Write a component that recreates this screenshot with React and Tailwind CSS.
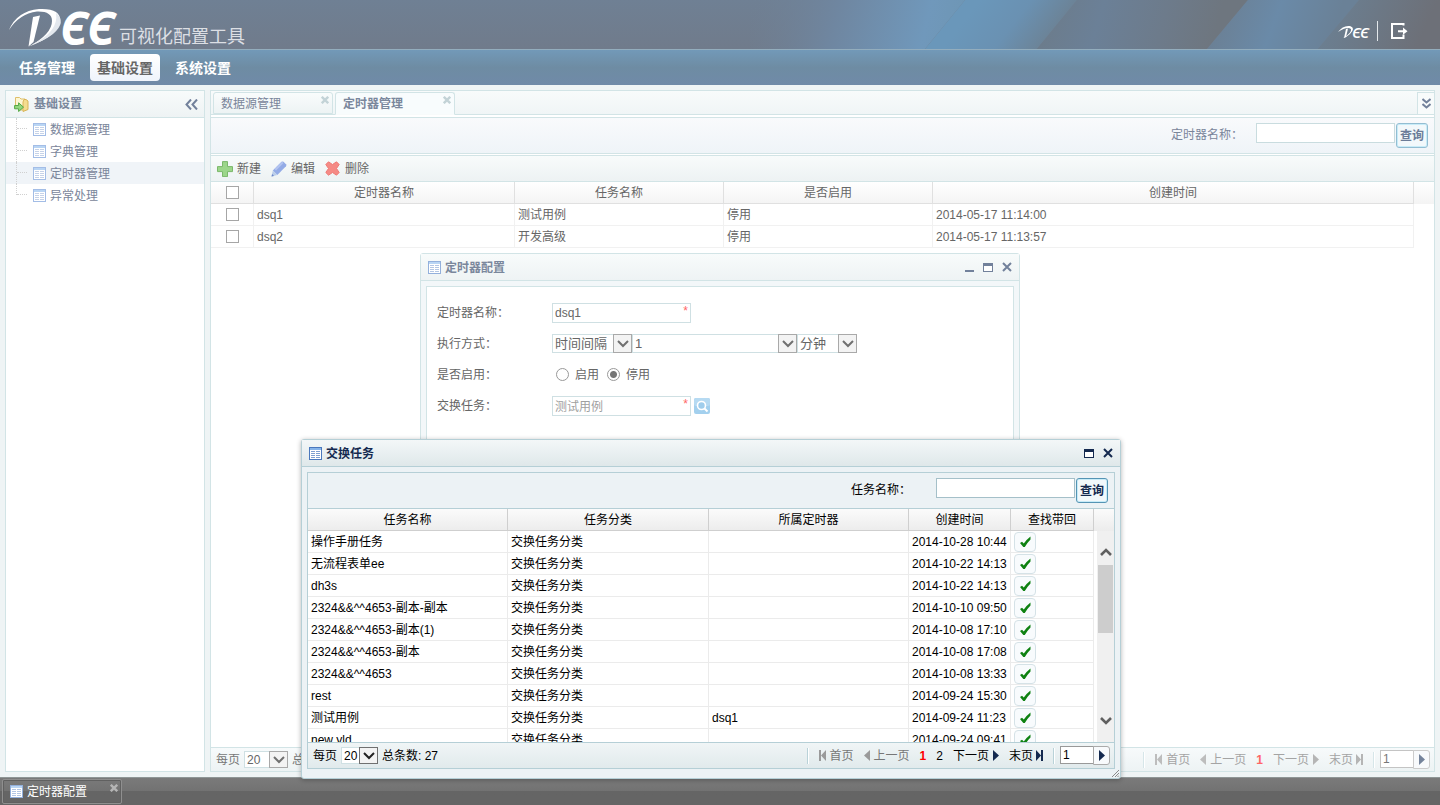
import React, { useState } from 'react';

const MENU = ['任务管理', '基础设置', '系统设置'];
const TREE = ['数据源管理', '字典管理', '定时器管理', '异常处理'];
const TABS = ['数据源管理', '定时器管理'];

const TIMERS = [
  { name: 'dsq1', task: '测试用例', status: '停用', created: '2014-05-17 11:14:00' },
  { name: 'dsq2', task: '开发高级', status: '停用', created: '2014-05-17 11:13:57' },
];

const TASKS = [
  { name: '操作手册任务', timer: '', created: '2014-10-28 10:44' },
  { name: '无流程表单ee', timer: '', created: '2014-10-22 14:13' },
  { name: 'dh3s', timer: '', created: '2014-10-22 14:13' },
  { name: '2324&&^^4653-副本-副本', timer: '', created: '2014-10-10 09:50' },
  { name: '2324&&^^4653-副本(1)', timer: '', created: '2014-10-08 17:10' },
  { name: '2324&&^^4653-副本', timer: '', created: '2014-10-08 17:08' },
  { name: '2324&&^^4653', timer: '', created: '2014-10-08 13:33' },
  { name: 'rest', timer: '', created: '2014-09-24 15:30' },
  { name: '测试用例', timer: 'dsq1', created: '2014-09-24 11:23' },
  { name: 'new yld', timer: '', created: '2014-09-24 09:41' },
];

/* ---------- icons ---------- */

function GridIcon({ strong, light }) {
  const border = strong ? '#4a78bd' : light ? '#a3bde6' : '#93b0dc';
  const line = strong ? '#7d9fd0' : light ? '#c5d2e8' : '#b3c6e4';
  const head = strong ? '#86b4ea' : '#b9d5f4';
  return (
    <svg width="13" height="13" viewBox="0 0 13 13" shapeRendering="crispEdges" className="shrink-0">
      <rect width="13" height="13" fill={border} />
      <rect x="1" y="1" width="11" height="2" fill={head} />
      <rect x="1" y="3" width="11" height="9" fill="#fff" />
      {[4, 6, 8, 10].map(y => (
        <g key={y} fill={line}>
          <rect x="2" y={y} width="4" height="1" />
          <rect x="7" y={y} width="4" height="1" />
        </g>
      ))}
    </svg>
  );
}

function FolderIcon() {
  return (
    <svg width="15" height="15" viewBox="0 0 15 15" className="shrink-0">
      <path d="M1.500 8V.5h4l1.500 1.500h4v11H6" fill="#fdf6d3" stroke="#dfbf6a" />
      <path d="M10 2.500h2l2 1.500v8.500L9 14.500V5z" fill="#f4dc90" stroke="#d8b458" />
      <path d="M.6 8.500h4V5.800L9.500 10.200 4.600 14.500v-2.700h-4z" fill="#93d67e" stroke="#54a842" />
    </svg>
  );
}

function PlusIcon() {
  return (
    <svg width="16" height="16" viewBox="0 0 16 16">
      <path d="M5.500.6h5v5h5v5h-5v5h-5v-5h-5v-5h5z" fill="#9cd68a" stroke="#7bb86b" strokeLinejoin="round" />
    </svg>
  );
}

function PencilIcon() {
  return (
    <svg width="16" height="16" viewBox="0 0 16 16">
      <path d="M1.800 9.500L10.500.8q1-.8 2 0l2.500 2.500q.8 1 0 2L6.300 14z" fill="#93abe6" />
      <path d="M3.500 8l7.500-7.300 1.500 1.400L5 9.600z" fill="#b3c4f0" />
      <path d="M1.800 9.500L6.300 14 .5 15.500z" fill="#b9cdea" />
      <path d="M.5 15.500l.6-2.500 1.900 1.900z" fill="#6c87c8" />
    </svg>
  );
}

function DeleteIcon() {
  return (
    <svg width="15" height="15" viewBox="0 0 15 15">
      <path d="M3.500.8l4 2.700 4-2.700 2.700 2.700-2.700 4 2.700 4-2.700 2.700-4-2.700-4 2.700L.8 11.500l2.700-4-2.700-4z" fill="#f58a85" stroke="#ee7a76" strokeLinejoin="round" />
    </svg>
  );
}

function CrossIcon({ size, color, width }) {
  return (
    <svg width={size} height={size} viewBox="0 0 10 10">
      <path d="M1 1l8 8M9 1l-8 8" stroke={color} strokeWidth={width} />
    </svg>
  );
}

function FirstIcon() {
  return (
    <svg width="7" height="11" viewBox="0 0 7 11" fill="currentColor">
      <path d="M0 0h2v11H0zM7 0v11L2 5.500z" />
    </svg>
  );
}

function LastIcon() {
  return (
    <svg width="7" height="11" viewBox="0 0 7 11" fill="currentColor">
      <path d="M5 0h2v11H5zM0 0v11l5-5.500z" />
    </svg>
  );
}

function LeftIcon() {
  return (
    <svg width="6" height="11" viewBox="0 0 6 11" fill="currentColor">
      <path d="M6 0v11L0 5.500z" />
    </svg>
  );
}

function RightIcon() {
  return (
    <svg width="6" height="11" viewBox="0 0 6 11" fill="currentColor">
      <path d="M0 0v11l6-5.500z" />
    </svg>
  );
}

function CheckIcon() {
  return (
    <svg width="13" height="12" viewBox="0 0 13 12">
      <path d="M1 7l2-1.200 1.800 1.800Q7.500 3.500 11.500.5V3.500Q8.500 6.500 5.800 11H4.300z" fill="#0f8212" />
    </svg>
  );
}

function Chevron({ up }) {
  return (
    <svg width="12" height="8" viewBox="0 0 12 8" fill="none">
      <path d={up ? 'M1 7l5-5 5 5' : 'M1 1l5 5 5-5'} stroke="#606060" strokeWidth="2.600" />
    </svg>
  );
}

/* ---------- shared parts ---------- */

function Select({ label, options, className, strong }) {
  return (
    <span className={`relative inline-block ${className}`}>
      <select
        aria-label={label}
        className={`block h-full w-full appearance-none border border-[#cfe0e3] bg-white px-[2px] leading-none outline-none ${strong ? 'text-black' : 'text-[#666]'}`}
      >
        {options.map(o => <option key={o}>{o}</option>)}
      </select>
      <span className={`pointer-events-none absolute inset-y-0 right-0 flex w-[19px] items-center justify-center border bg-[#f3f3f3] ${strong ? 'border-[#707070]' : 'border-[#a9a9a9]'}`}>
        <svg width="12" height="8" viewBox="0 0 12 8" fill="none">
          <path d="M1 1l5 5 5-5" stroke={strong ? '#222' : '#707070'} strokeWidth="2" />
        </svg>
      </span>
    </span>
  );
}

function SearchBar({ id, label, strong }) {
  return (
    <form className="flex h-[35px] items-start justify-end pt-[5px] pr-[6px]" onSubmit={e => e.preventDefault()}>
      <label htmlFor={id} className={`w-[85px] leading-6 ${strong ? 'text-black' : 'text-[#7a859a]'}`}>{label}</label>
      <input id={id} className={`h-5 w-[139px] border bg-white px-[3px] outline-none ${strong ? 'border-[#a5c0c9]' : 'border-[#c9dcdf]'}`} />
      <button
        className={`ml-px h-[25px] w-8 rounded-[3px] border bg-[#f2f8fb] font-bold inset-ring inset-ring-[#c8ecf8] ${strong ? 'border-[#5594b4] text-[#14294f]' : 'border-[#93bdd2] text-[#6b7c98]'}`}
      >
        查询
      </button>
    </form>
  );
}

function Pager({ size, total, pages, strong }) {
  const off = strong ? 'text-[#777]' : 'text-[#a4a4a4]';
  const on = strong ? 'text-black' : 'text-[#a4a4a4]';
  const arrow = strong ? 'text-[#14294f]' : 'text-[#b5b5b5]';
  const prevArrow = strong ? 'text-[#9a9a9a]' : 'text-[#bdbdbd]';
  const rule = `h-4 w-[2px] border-l bg-white ${strong ? 'border-[#b9d2d8]' : 'border-[#d6e6e9]'}`;
  return (
    <div
      className={`flex shrink-0 items-center justify-between border-t bg-linear-to-b pr-1 pl-[5px] ${strong ? 'h-[26px] border-[#b5cfd6] from-[#f0f5f6] to-[#e1eaec] text-black' : 'h-6 border-[#d2e4e6] from-[#f7fafb] to-[#edf3f4] text-[#777]'}`}
    >
      <div className="flex items-center gap-1">
        <span>每页</span>
        <Select label="每页" options={[size, '50', '100']} strong={strong} className={strong ? 'h-[17px] w-[37px]' : 'h-[17px] w-[44px]'} />
        <span>总条数: {total}</span>
      </div>
      <div className="flex items-center gap-[10px]">
        <span className={rule} />
        <button className={`flex items-center gap-1 ${off}`}><span className={prevArrow}><FirstIcon /></span>首页</button>
        <button className={`flex items-center gap-1 ${off}`}><span className={prevArrow}><LeftIcon /></span>上一页</button>
        {pages.map((p, i) => (
          <button key={p} className={i === 0 ? (strong ? 'font-bold text-[#f00]' : 'font-bold text-[#f66]') : on}>{p}</button>
        ))}
        <button className={`flex items-center gap-1 ${on}`}>下一页<span className={arrow}><RightIcon /></span></button>
        <button className={`flex items-center gap-[3px] ${on}`}>末页<span className={arrow}><LastIcon /></span></button>
        <span className={rule} />
        <span className="-ml-[5px] flex">
          <input aria-label="页码" defaultValue="1" className={`h-[18px] w-[34px] border bg-white px-[2px] text-[12px] outline-none ${strong ? 'border-[#999]' : 'border-[#c4c4c4]'}`} />
          <button aria-label="跳转" className={`-ml-px flex h-[19px] w-[17px] items-center justify-center rounded-r-[3px] border bg-[#f8fafc] ${strong ? 'border-[#aaa] text-[#14294f]' : 'border-[#ccc] text-[#74839b]'}`}>
            <RightIcon />
          </button>
        </span>
      </div>
    </div>
  );
}

function CheckBox({ label }) {
  return (
    <input type="checkbox" aria-label={label} className="block size-[13px] mx-auto appearance-none border border-[#a6a6a6] bg-white checked:bg-[#8a8a8a]" />
  );
}

/* ---------- page sections ---------- */

function Banner() {
  return (
    <header className="relative flex h-[50px] justify-between overflow-hidden border-b border-[#93adbd] bg-linear-to-b from-[#6f8094] to-[#707b8b]">
      <svg className="absolute top-0 right-0" width="740" height="49" viewBox="0 0 740 49">
        <defs>
          <linearGradient id="b0" gradientUnits="userSpaceOnUse" x1="50" y1="0" x2="260" y2="50">
            <stop offset="0" stopColor="#6f8094" stopOpacity="0" />
            <stop offset=".4" stopColor="#6f86a0" />
            <stop offset=".82" stopColor="#7098bb" />
            <stop offset="1" stopColor="#6e96b4" />
          </linearGradient>
          <linearGradient id="b1" gradientUnits="userSpaceOnUse" x1="280" y1="0" x2="345" y2="50">
            <stop offset="0" stopColor="#6a97ba" />
            <stop offset=".5" stopColor="#6a91b2" />
            <stop offset="1" stopColor="#6c8193" />
          </linearGradient>
          <linearGradient id="b2" gradientUnits="userSpaceOnUse" x1="340" y1="0" x2="510" y2="50">
            <stop offset="0" stopColor="#6c7b89" />
            <stop offset=".35" stopColor="#6b8097" />
            <stop offset=".7" stopColor="#6d7b8b" />
            <stop offset="1" stopColor="#6e767f" />
          </linearGradient>
          <linearGradient id="b3" gradientUnits="userSpaceOnUse" x1="520" y1="0" x2="630" y2="40">
            <stop offset="0" stopColor="#6b7f93" />
            <stop offset=".5" stopColor="#6a8aa8" />
            <stop offset="1" stopColor="#6a8197" />
          </linearGradient>
          <linearGradient id="b4" gradientUnits="userSpaceOnUse" x1="630" y1="0" x2="720" y2="40">
            <stop offset="0" stopColor="#6b8093" />
            <stop offset="1" stopColor="#6d7078" />
          </linearGradient>
        </defs>
        <path d="M50 0h215l-40 49H50z" fill="url(#b0)" />
        <path d="M265 0h112l-40 49H225z" fill="url(#b1)" />
        <path d="M377 0h171l-41 49H337z" fill="url(#b2)" />
        <path d="M548 0h111l-41 49H507z" fill="url(#b3)" />
        <path d="M659 0h81v49H618z" fill="url(#b4)" />
      </svg>
      <div className="relative flex items-end pl-2">
        <svg width="111" height="49" viewBox="0 0 111 49" className="overflow-visible" role="img" aria-label="DEE">
          <path d="M1 30Q9 11 31 9Q53 8 52 21Q51 35 21 46.500Q44 34 44 21Q44 11 29 11.500Q11 14 1 30z" fill="#fff" />
          <path d="M25 17l7-1.500L25.500 42l-5 4.500z" fill="#fff" />
          <path d="M48 13Q59 22 45 34Q36 41 24 44.500Q51 32 48 13z" fill="#e3e8ee" />
          <g fill="#fff" fontFamily="Open Sans, sans-serif" fontStyle="italic" fontWeight="700" fontSize="46">
            <text x="52" y="45">Є</text>
            <text x="79" y="45">Є</text>
          </g>
        </svg>
        <span className="text-lg leading-6 text-[#dcdfe4]">可视化配置工具</span>
      </div>
      <div className="relative mr-8 flex items-center gap-2 pt-3">
        <svg width="31" height="16" viewBox="0 0 31 16" className="overflow-visible" role="img" aria-label="DEE">
          <path d="M0 9Q5 2 12 3Q18 5 12 11Q9 14 5 15Q14 10 13 6Q9 3 0 9z" fill="#fff" />
          <path d="M8 6l2-.5L8 14l-2 1z" fill="#fff" />
          <g fill="#fff" fontFamily="Open Sans, sans-serif" fontStyle="italic" fontWeight="600" fontSize="15">
            <text x="14" y="15">Є</text>
            <text x="22" y="15">Є</text>
          </g>
        </svg>
        <span className="h-5 w-px bg-[#e3e8ec]" />
        <button aria-label="退出" className="ml-1">
          <svg width="18" height="18" viewBox="0 0 18 18">
            <path d="M13.500 5.500V2H2v14h11.500v-3.500" fill="none" stroke="#fff" strokeWidth="2" strokeDasharray="0 2 40" />
            <path d="M8 8.200h5V5.500L17.500 9.200 13 12.800V10.200H8z" fill="#fff" />
          </svg>
        </button>
      </div>
    </header>
  );
}

function TopNav() {
  return (
    <nav className="flex h-[35px] shrink-0 items-center gap-2 bg-linear-to-b from-[#7299b8] from-0% via-[#6e8ca3] via-50% to-[#708aa8] pl-3">
      {MENU.map((m, i) => (
        <a
          key={m}
          href="#"
          className={`flex h-[27px] w-[70px] items-center justify-center rounded text-sm font-bold ${i === 1 ? 'bg-linear-to-b from-white to-[#eff4fb] text-[#666]' : 'text-white'}`}
        >
          {m}
        </a>
      ))}
    </nav>
  );
}

function Sidebar() {
  return (
    <aside className="w-[200px] shrink-0 border border-[#d2e4e6] bg-white">
      <div className="flex h-[27px] items-center border-b border-[#d2e4e6] bg-linear-to-b from-[#f8fbfb] to-[#eef3f4] pr-[6px] pl-2">
        <FolderIcon />
        <h2 className="ml-[5px] flex-1 font-bold text-[#7a879c]">基础设置</h2>
        <button aria-label="收起">
          <svg width="13" height="11" viewBox="0 0 13 11" fill="none" stroke="#72819b" strokeWidth="2">
            <path d="M6 0.500L1.500 5.500 6 10.500M12 0.500L7.500 5.500 12 10.500" />
          </svg>
        </button>
      </div>
      <ul>
        {TREE.map((t, i) => (
          <li key={t} className={`flex h-[22px] pl-[10px] ${i === 2 ? 'bg-[#f0f4f8]' : ''}`}>
            <span className={`w-[11px] border-l border-dotted border-[#d0d0d0] ${i === TREE.length - 1 ? 'h-[11px]' : 'h-full'}`}>
              <span className="block h-[11px] border-b border-dotted border-[#d0d0d0]" />
            </span>
            <a href="#" className="ml-[6px] flex items-center gap-1 text-[#7a859a]">
              <GridIcon light />
              <span className="pt-[2px]">{t}</span>
            </a>
          </li>
        ))}
      </ul>
    </aside>
  );
}

function TimerTable() {
  const th = 'border-r border-b border-[#e0e0e0] font-normal';
  const td = 'border-r border-b border-[#f1f1f1] pl-[3px]';
  return (
    <table className="w-full table-fixed border-separate border-spacing-0 text-[#666]">
      <colgroup>
        <col className="w-[43px]" />
        <col className="w-[21.34%]" />
        <col className="w-[17.09%]" />
        <col className="w-[17.09%]" />
        <col />
        <col className="w-[20px]" />
      </colgroup>
      <thead>
        <tr className="h-[22px] bg-linear-to-b from-white to-[#f4f4f4]">
          <th className={th}><CheckBox label="全选" /></th>
          <th className={th}>定时器名称</th>
          <th className={th}>任务名称</th>
          <th className={th}>是否启用</th>
          <th className={th}>创建时间</th>
          <th />
        </tr>
      </thead>
      <tbody>
        {TIMERS.map(t => (
          <tr key={t.name} className="h-[22px]">
            <td className="border-r border-b border-[#f1f1f1]"><CheckBox label={t.name} /></td>
            <td className={td}>{t.name}</td>
            <td className={td}>{t.task}</td>
            <td className={td}>{t.status}</td>
            <td className={td}>{t.created}</td>
            <td />
          </tr>
        ))}
      </tbody>
    </table>
  );
}

function MainPanel() {
  return (
    <main className="flex min-w-0 flex-1 flex-col border border-[#d2e4e6] bg-white">
      <div className="flex h-6 justify-between border-b border-[#d2e4e6] bg-linear-to-b from-[#f8fbfb] to-[#f0f5f6] pt-px pl-[2px]">
        <div className="flex gap-[2px]">
          {TABS.map((t, i) => (
            <div
              key={t}
              className={`flex w-[120px] items-start justify-between rounded-t-[3px] border border-[#d2e4e6] pr-[3px] pl-[7px] ${i === 1 ? '-mb-px border-b-[#f8fbfb] bg-[#f8fcfd]' : 'bg-linear-to-b from-[#f9fcfc] to-[#edf3f4]'}`}
            >
              <a href="#" className={`leading-[22px] ${i === 1 ? 'font-bold text-[#7a879c]' : 'text-[#7a859a]'}`}>{t}</a>
              <button aria-label="关闭" className="pt-[3px]"><CrossIcon size={8} color="#c3d3d7" width={3} /></button>
            </div>
          ))}
        </div>
        <button aria-label="更多" className="flex w-[17px] items-center justify-center border-t border-l border-[#d2e4e6] bg-[#f8fbfb]">
          <svg width="9" height="11" viewBox="0 0 9 11" fill="none" stroke="#72819b" strokeWidth="2">
            <path d="M.5 1l4 3.500L8.500 1M.5 6l4 3.500L8.500 6" />
          </svg>
        </button>
      </div>
      <div className="mt-[2px] border-y border-[#d2e4e6] bg-linear-to-b from-[#f9fafc] to-[#eff4f8]">
        <SearchBar id="timer-q" label="定时器名称：" />
      </div>
      <div className="mt-px flex h-[27px] items-center gap-[10px] border-y border-[#d2e4e6] bg-linear-to-b from-[#f8fbfb] to-[#edf2f3] pl-[6px] text-[#666]">
        <button className="flex items-center gap-1"><PlusIcon />新建</button>
        <button className="flex items-center gap-1"><PencilIcon />编辑</button>
        <button className="flex items-center gap-[5px]"><DeleteIcon />删除</button>
      </div>
      <div className="flex-1">
        <TimerTable />
      </div>
      <Pager size="20" total={2} pages={['1']} />
    </main>
  );
}

function ConfigWindow() {
  const [enabled, setEnabled] = useState(false);
  const radio = 'size-[13px] appearance-none rounded-full border border-[#999] bg-white checked:bg-[radial-gradient(#777_0_3px,#fff_4px)]';
  const row = 'flex h-[31px] items-center';
  const label = 'w-[115px] text-[#666]';
  return (
    <section className="absolute top-[253px] left-[420px] flex h-[420px] w-[600px] flex-col rounded-t-[3px] border border-[#d2e4e6] bg-[#f3f7f9]">
      <div className="flex h-[27px] shrink-0 items-center border-b border-[#d2e4e6] bg-linear-to-b from-[#f8fbfb] to-[#eef3f4] px-[7px]">
        <GridIcon />
        <h2 className="ml-1 flex-1 pt-[2px] font-bold text-[#7a879c]">定时器配置</h2>
        <div className="flex items-center gap-[9px]">
          <button aria-label="最小化" className="mt-2 h-[2px] w-[9px] bg-[#72819b]" />
          <button aria-label="最大化" className="h-[9px] w-[10px] border border-t-[3px] border-[#72819b] bg-white" />
          <button aria-label="关闭"><CrossIcon size={10} color="#72819b" width={2} /></button>
        </div>
      </div>
      <form className="m-[5px] flex-1 border border-[#d2e4e6] bg-white pt-[10px] pl-[10px]" onSubmit={e => e.preventDefault()}>
        <div className={row}>
          <label htmlFor="cfg-name" className={label}>定时器名称：</label>
          <span className="relative">
            <input id="cfg-name" defaultValue="dsq1" className="block h-5 w-[139px] border border-[#cfe0e3] px-[2px] text-[#666] outline-none" />
            <span className="absolute top-0 right-[3px] leading-4 text-[#f66]">*</span>
          </span>
        </div>
        <div className={row}>
          <span className={label}>执行方式：</span>
          <Select label="执行方式" options={['时间间隔', '指定时间']} className="h-[19px] w-[80px] text-[13px]" />
          <Select label="间隔" options={['1', '2', '5', '10']} className="h-[19px] w-[165px] text-[13px]" />
          <Select label="单位" options={['分钟', '小时']} className="h-[19px] w-[60px] text-[13px]" />
        </div>
        <div className={row}>
          <span className={label}>是否启用：</span>
          <label className="ml-1 flex items-center gap-[6px] text-[#666]">
            <input type="radio" name="enabled" className={radio} checked={enabled} onChange={() => setEnabled(true)} />启用
          </label>
          <label className="ml-2 flex items-center gap-[6px] text-[#666]">
            <input type="radio" name="enabled" className={radio} checked={!enabled} onChange={() => setEnabled(false)} />停用
          </label>
        </div>
        <div className={row}>
          <label htmlFor="cfg-task" className={label}>交换任务：</label>
          <span className="relative">
            <input id="cfg-task" readOnly value="测试用例" className="block h-5 w-[139px] border border-[#cfe0e3] px-[2px] text-[#a0a0a0] outline-none" />
            <span className="absolute top-0 right-[3px] leading-4 text-[#f66]">*</span>
          </span>
          <button aria-label="选择任务" className="ml-[3px]">
            <svg width="16" height="16" viewBox="0 0 16 16">
              <rect width="16" height="16" rx="2" fill="#a3d0ee" />
              <rect width="16" height="8" rx="2" fill="#b6daf2" />
              <circle cx="7.500" cy="7.500" r="4" fill="#9fcdec" stroke="#fff" strokeWidth="1.600" />
              <path d="M10.500 10.500l3 3" stroke="#fff" strokeWidth="2" />
            </svg>
          </button>
        </div>
      </form>
    </section>
  );
}

function TaskWindow() {
  const th = 'border-r border-b border-[#cfcfcf] font-normal';
  const td = 'border-r border-b border-[#ebebeb] pl-[3px] whitespace-nowrap';
  return (
    <section className="absolute top-[439px] left-[301px] w-[820px] rounded-[3px] border border-[#b5cfd6] bg-[#ecf2f5] text-black shadow-[0_1px_5px_rgba(0,0,0,0.3)]">
      <div className="flex h-[27px] items-center border-b border-[#b5cfd6] bg-linear-to-b from-[#f3f7f8] to-[#dfe8ea] px-[7px]">
        <GridIcon strong />
        <h2 className="ml-1 flex-1 pt-[2px] font-bold text-[#14294f]">交换任务</h2>
        <div className="flex items-center gap-[9px]">
          <button aria-label="最大化" className="h-[9px] w-[10px] border border-t-[3px] border-[#14294f] bg-white" />
          <button aria-label="关闭"><CrossIcon size={10} color="#14294f" width={2} /></button>
        </div>
      </div>
      <div className="mx-[5px] mt-[5px] mb-[9px] border border-[#b5cfd6]">
        <SearchBar id="task-q" label="任务名称：" strong />
        <div className="relative h-[234px] overflow-hidden border-t border-[#b5cfd6] bg-white">
          <table className="w-full table-fixed border-separate border-spacing-0">
            <colgroup>
              <col className="w-[200px]" />
              <col className="w-[201px]" />
              <col className="w-[200px]" />
              <col className="w-[102px]" />
              <col className="w-[83px]" />
              <col />
            </colgroup>
            <thead>
              <tr className="h-[22px] bg-linear-to-b from-[#fbfbfb] to-[#ececec]">
                <th className={th}>任务名称</th>
                <th className={th}>任务分类</th>
                <th className={th}>所属定时器</th>
                <th className={th}>创建时间</th>
                <th className={th}>查找带回</th>
                <th />
              </tr>
            </thead>
            <tbody>
              {TASKS.map(t => (
                <tr key={t.created + t.name} className="h-[22px]">
                  <td className={td}>{t.name}</td>
                  <td className={td}>交换任务分类</td>
                  <td className={td}>{t.timer}</td>
                  <td className={td}>{t.created}</td>
                  <td className={td}>
                    <button aria-label="带回" className="flex h-5 w-[22px] items-center justify-center rounded border border-[#d5e2e7] bg-[#f8fbfd]">
                      <CheckIcon />
                    </button>
                  </td>
                  <td />
                </tr>
              ))}
            </tbody>
          </table>
          {/* scrollbar */}
          <div className="absolute top-[22px] right-0 bottom-0 flex w-[17px] flex-col items-center bg-[#f0f0f0]">
            <div className="flex h-[34px] items-end justify-center pb-[9px]"><Chevron up /></div>
            <div className="h-[68px] w-[15px] bg-[#cdcdcd]" />
            <div className="mt-auto flex h-[25px] items-start"><Chevron /></div>
          </div>
        </div>
        <Pager size="20" total={27} pages={['1', '2']} strong />
      </div>
      <svg className="absolute right-px bottom-px" width="7" height="7" viewBox="0 0 7 7" stroke="#8a8a8a">
        <path d="M0 7l7-7M3 7l4-4M5.500 7L7 5.500" />
      </svg>
    </section>
  );
}

function TaskBar() {
  return (
    <footer className="flex h-7 shrink-0 items-center border-t border-[#8f9696] bg-linear-to-b from-[#7a7a7a] from-0% via-[#727272] via-50% to-[#656565] to-50% pl-[2px]">
      <div className="flex h-[25px] w-[120px] items-center gap-1 rounded-[2px] border border-[#8f8f8f] pr-[3px] pl-[7px] inset-ring inset-ring-[#606060]">
        <GridIcon />
        <button className="flex-1 text-left text-white">定时器配置</button>
        <button aria-label="关闭" className="self-start pt-1"><CrossIcon size={8} color="#b5b5b5" width={3} /></button>
      </div>
    </footer>
  );
}

export default function App() {
  return (
    <div className="relative flex min-h-screen flex-col overflow-hidden bg-[#eff4f5] font-['Liberation_Sans','Noto_Sans_CJK_SC',sans-serif] text-[12px] leading-4">
      <Banner />
      <TopNav />
      <div className="flex flex-1 gap-[5px] p-[5px]">
        <Sidebar />
        <MainPanel />
      </div>
      <TaskBar />
      <ConfigWindow />
      <TaskWindow />
    </div>
  );
}
